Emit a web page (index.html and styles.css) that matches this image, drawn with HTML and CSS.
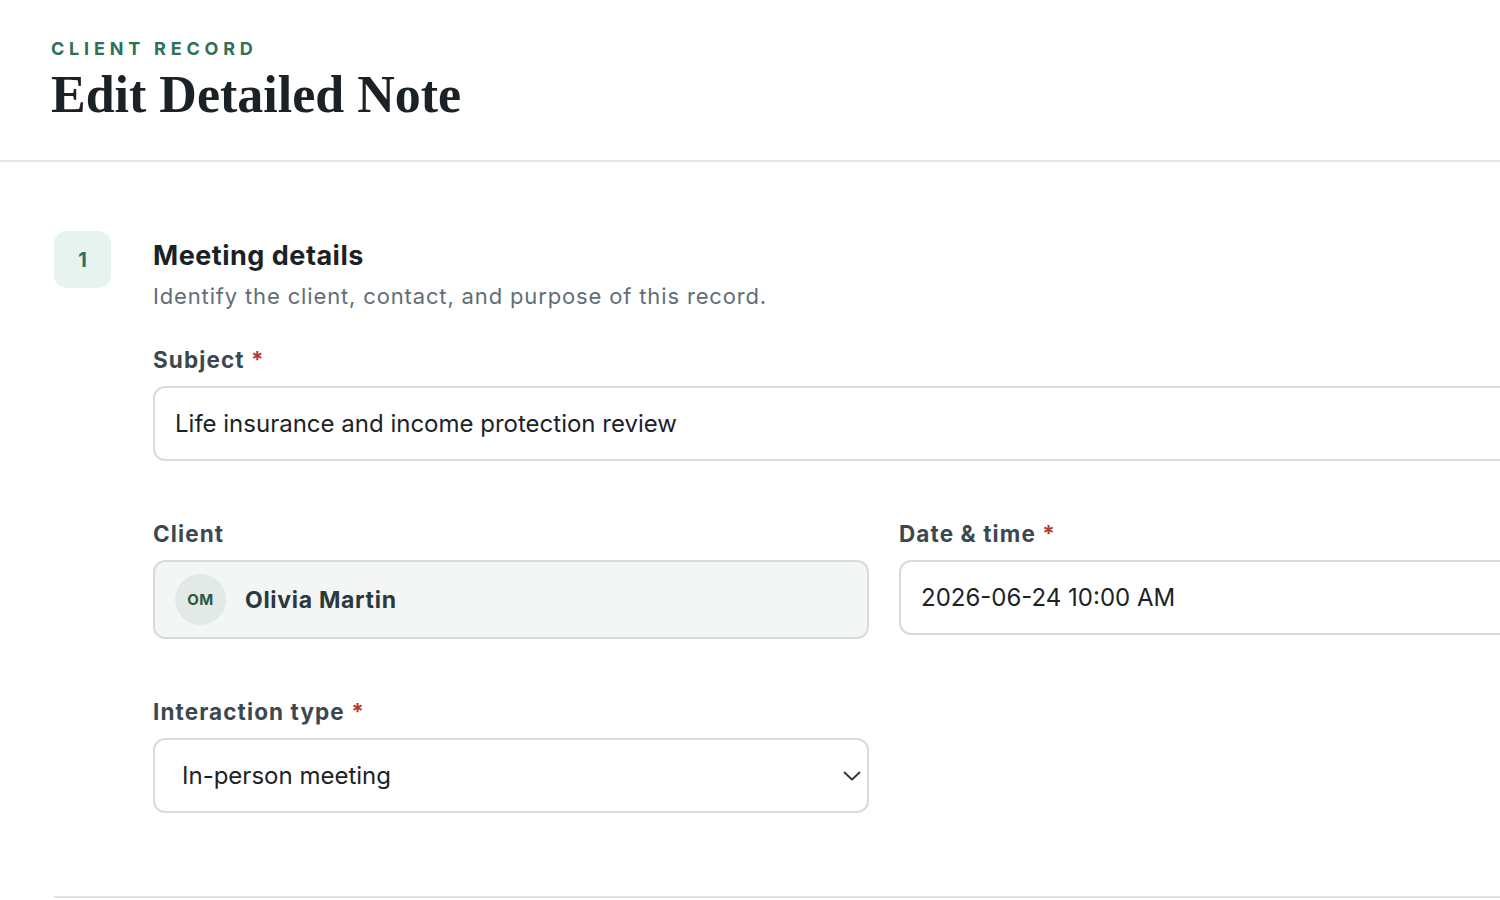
FILE: index.html
```html
<!DOCTYPE html>
<html lang="en">
<head>
  <meta charset="UTF-8">
  <meta name="viewport" content="width=device-width, initial-scale=1.0">
  <title>Edit Detailed Note</title>
  <link rel="stylesheet" href="styles.css">
</head>
<body>

<!-- Page header -->
<header class="page-header">
  <div class="eyebrow">Client record</div>
  <h1 class="page-title">Edit Detailed Note</h1>
</header>

<main class="content">
  <!-- Step 1: meeting details -->
  <section class="step">
    <div class="step-number">1</div>
    <div class="step-body">
      <h2 class="step-title">Meeting details</h2>
      <p class="step-desc">Identify the client, contact, and purpose of this record.</p>

      <div class="field">
        <label class="label" for="subject">Subject <span class="req">*</span></label>
        <input id="subject" class="input" type="text" value="Life insurance and income protection review">
      </div>

      <div class="row">
        <div class="field">
          <span class="label">Client</span>
          <div class="client-box">
            <span class="avatar">OM</span>
            <span class="client-name">Olivia Martin</span>
          </div>
        </div>
        <div class="field">
          <label class="label" for="when">Date &amp; time <span class="req">*</span></label>
          <input id="when" class="input" type="text" value="2026-06-24 10:00 AM">
        </div>
      </div>

      <div class="row">
        <div class="field">
          <label class="label" for="type">Interaction type <span class="req">*</span></label>
          <div class="select-wrap">
            <select id="type" class="select">
              <option>In-person meeting</option>
              <option>Phone call</option>
              <option>Video call</option>
              <option>Email</option>
            </select>
            <svg class="chevron" width="18" height="10" viewBox="0 0 18 10" fill="none">
              <path d="M1.5 1.5L9 8.5L16.5 1.5" stroke="#2b3338" stroke-width="1.8" stroke-linecap="round" stroke-linejoin="round"/>
            </svg>
          </div>
        </div>
      </div>
    </div>
  </section>

  <div class="divider"></div>
</main>

</body>
</html>
```

FILE: styles.css
```css
* {
  box-sizing: border-box;
}
html, body {
  overflow: hidden;
}
body {
  margin: 0;
  background-color: #fff;
  font-family: Inter, "Noto Sans", sans-serif;
  color: #1c2327;
}

/* header */
.page-header {
  padding: 39px 51px 37px;
  border-bottom: 2px solid #e1e6e8;
  width: 1500px;
}
.eyebrow {
  font-size: 18px;
  line-height: 20px;
  font-weight: 700;
  letter-spacing: 4.8px;
  text-transform: uppercase;
  color: #2f7058;
}
.page-title {
  margin: 8px 0 0;
  font-family: "Liberation Serif", "Times New Roman", serif;
  font-size: 52px;
  line-height: 56px;
  font-weight: 700;
  color: #1a2226;
}

/* step */
.content {
  padding: 69px 0 0 54px;
  width: 1620px;
}
.step {
  display: flex;
  gap: 42px;
}
.step-number {
  flex: none;
  width: 57px;
  height: 57px;
  border-radius: 13px;
  background-color: #e7f3ee;
  color: #2f7058;
  font-weight: 700;
  font-size: 20px;
  display: flex;
  align-items: center;
  justify-content: center;
}
.step-body {
  width: 1462px;
}
.step-title {
  margin: 8px 0 0;
  font-size: 27px;
  line-height: 34px;
  font-weight: 700;
  letter-spacing: 0.5px;
  color: #1a2226;
}
.step-desc {
  margin: 8px 0 0;
  font-size: 22px;
  line-height: 30px;
  letter-spacing: 0.85px;
  color: #626e76;
}

/* fields */
.field {
  margin-top: 34px;
}
.row {
  display: grid;
  grid-template-columns: 1fr 1fr;
  gap: 30px;
  margin-top: 58px;
}
.row .field {
  margin-top: 0;
}
.label {
  display: block;
  font-size: 22.5px;
  line-height: 30px;
  font-weight: 700;
  letter-spacing: 1.1px;
  color: #3c4850;
  margin-bottom: 11px;
}
.req {
  color: #b0392c;
}
.input,
.select {
  display: block;
  width: 100%;
  height: 75px;
  padding: 0 20px;
  border: 2px solid #d4dddd;
  border-radius: 12px;
  background-color: #fff;
  font-family: inherit;
  font-size: 24px;
  color: #1c2327;
  outline: none;
}
.client-box {
  display: flex;
  align-items: center;
  gap: 19px;
  height: 79px;
  padding: 0 20px;
  border: 2px solid #d4dddd;
  border-radius: 12px;
  background-color: #f3f6f5;
}
.avatar {
  width: 51px;
  height: 51px;
  border-radius: 50%;
  background-color: #e1eae6;
  color: #2c5847;
  font-size: 15px;
  font-weight: 700;
  letter-spacing: 0.5px;
  display: flex;
  align-items: center;
  justify-content: center;
}
.client-name {
  font-size: 23px;
  font-weight: 700;
  letter-spacing: 0.7px;
  color: #2b383e;
}
.select-wrap {
  position: relative;
}
.select {
  appearance: none;
  -webkit-appearance: none;
  padding-left: 27px;
}
.chevron {
  position: absolute;
  right: 8px;
  top: 33px;
  pointer-events: none;
}
.divider {
  margin-top: 83px;
  height: 2px;
  background-color: #dde3e5;
}
```
